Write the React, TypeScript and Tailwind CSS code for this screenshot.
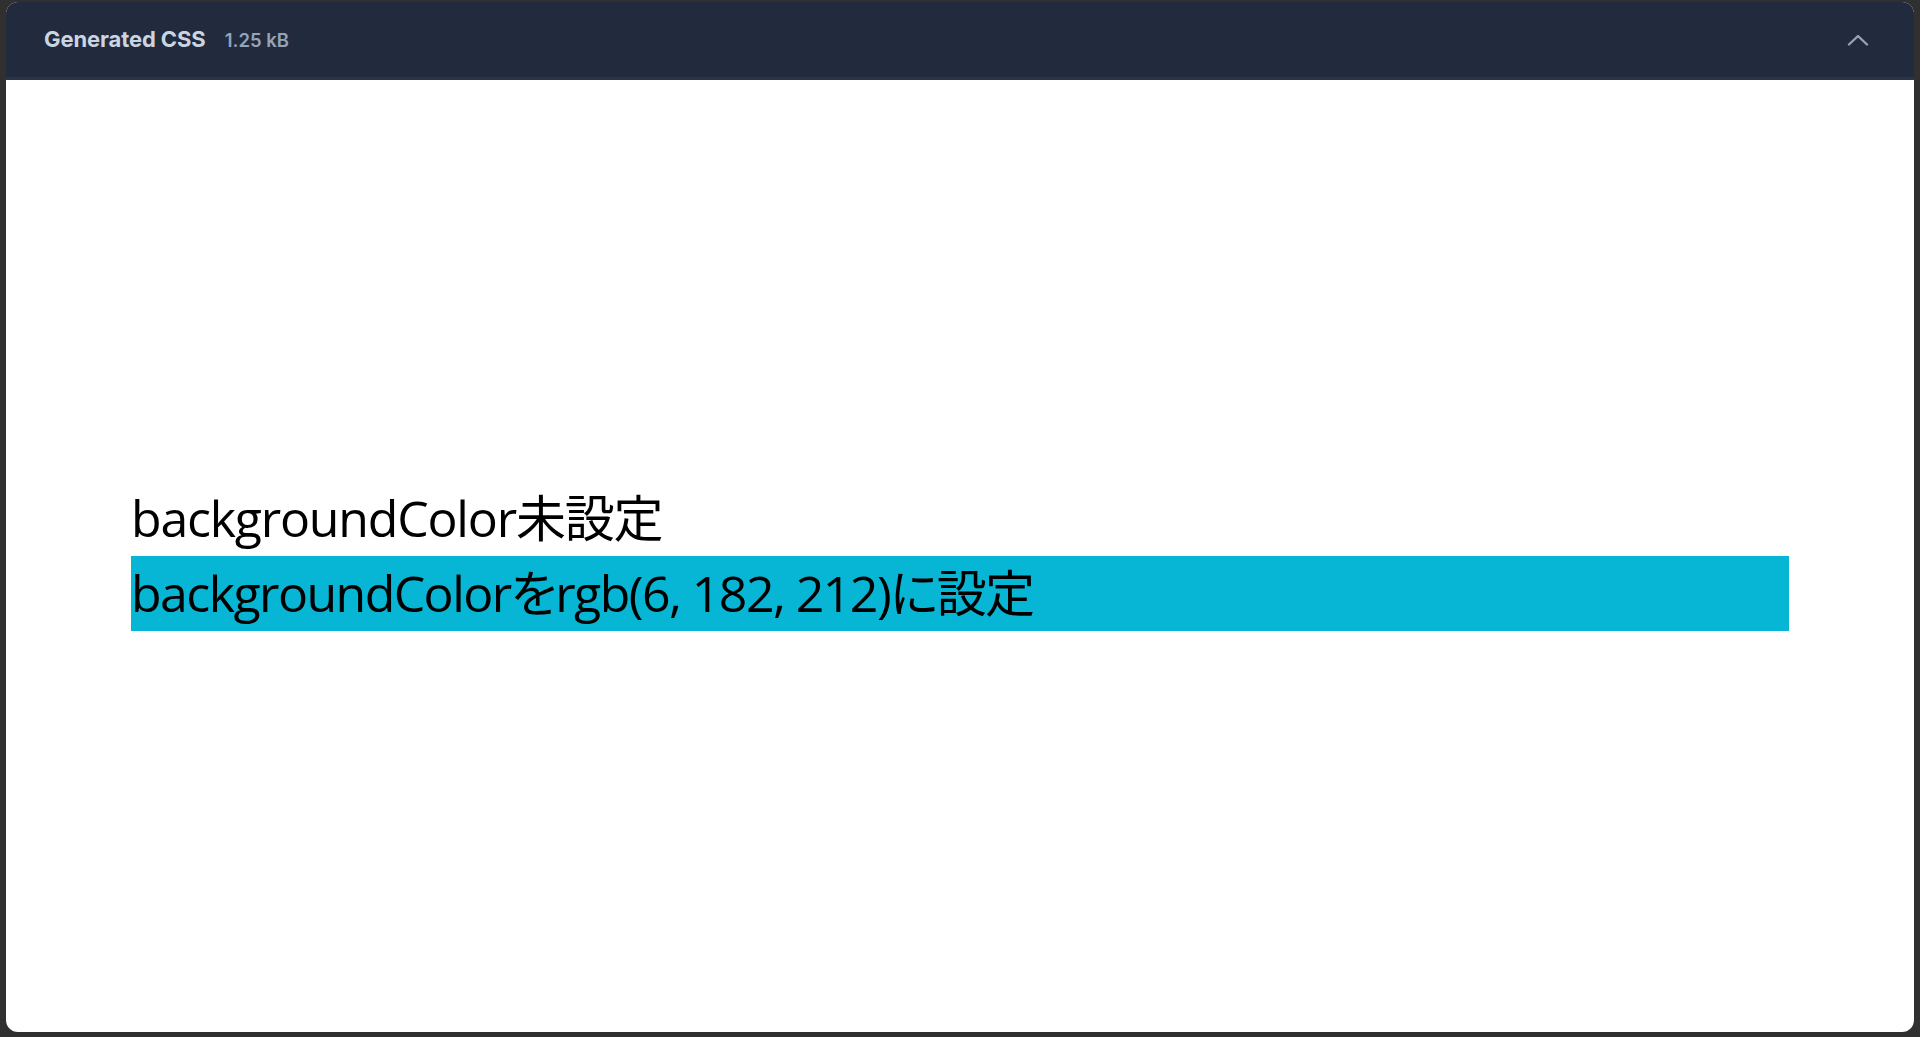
const textFont = "[font-family:'Open_Sans','Noto_Sans_CJK_JP',sans-serif] [font-feature-settings:'palt']"

function ChevronUpIcon() {
  return (
    <svg width="22" height="12" viewBox="0 0 22 12" fill="none" className="text-[#94a3b8]">
      <path d="M2 10.5 L11 2 L20 10.5" stroke="currentColor" strokeWidth="2.4" strokeLinecap="round" strokeLinejoin="round" />
    </svg>
  )
}

export default function App() {
  return (
    <div className="h-[1037px] w-full bg-[#303030] pt-[2px] pb-[5px] px-[6px] flex">
      <div className="flex-1 flex flex-col rounded-[12px] overflow-hidden bg-white">
        <header className="h-[78px] shrink-0 flex items-center justify-between pl-[38px] pr-[45px] bg-[#212b3d] border-b-[3px] border-[#2a3446] font-['Inter',sans-serif]">
          <div className="flex items-baseline gap-[19px]">
            <span className="text-[22px] font-bold text-[#cbd5e1] tracking-[-0.1px]">Generated CSS</span>
            <span className="text-[18.5px] font-semibold text-[#94a3b8]">1.25 kB</span>
          </div>
          <ChevronUpIcon />
        </header>

        <main className={`flex-1 flex flex-col justify-center px-[125px] text-black text-[50px] leading-[75px] tracking-[-1.2px] ${textFont}`}>
          <p>backgroundColor未設定</p>
          <p className="bg-[#06b6d4] tracking-[-1.55px]">backgroundColorをrgb(6, 182, 212)に設定</p>
        </main>
      </div>
    </div>
  )
}
